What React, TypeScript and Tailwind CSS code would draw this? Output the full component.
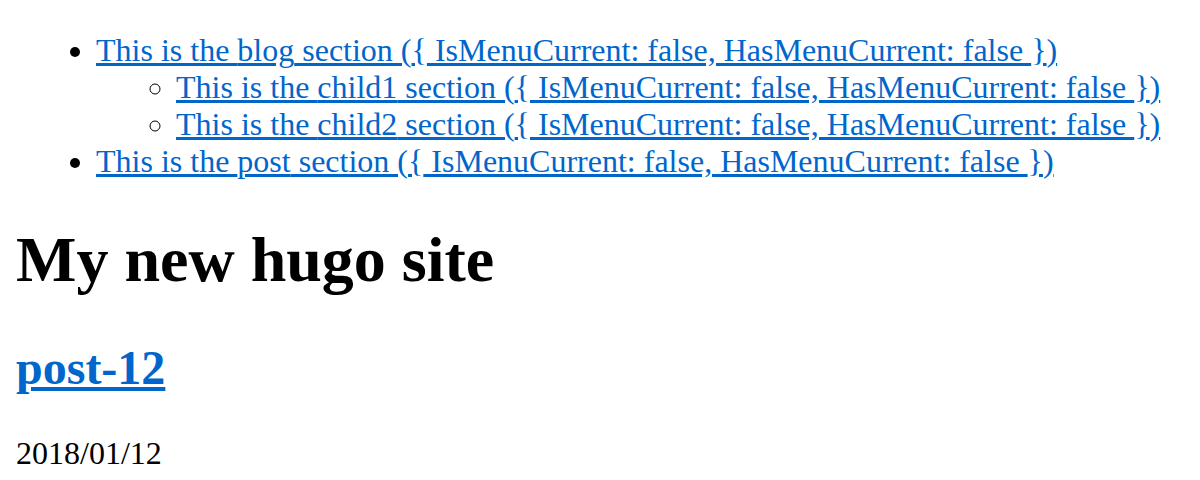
const sections = [
  { name: "blog", children: ["child1", "child2"] },
  { name: "post", children: [] as string[] },
]

function MenuLink({ name }: { name: string }) {
  return (
    <a href="#" className="text-[#0066cc] underline">
      This is the {name} section ({"{"} IsMenuCurrent: false, HasMenuCurrent: false {"}"})
    </a>
  )
}

export default function App() {
  return (
    <div className="m-4 bg-white text-black text-[32px] leading-[normal] font-['Liberation_Serif','Times_New_Roman',serif]">
      <ul className="list-disc pl-20 my-8">
        {sections.map((s) => (
          <li key={s.name}>
            <MenuLink name={s.name} />
            {s.children.length > 0 && (
              <ul className="list-[circle] pl-20">
                {s.children.map((c) => (
                  <li key={c}>
                    <MenuLink name={c} />
                  </li>
                ))}
              </ul>
            )}
          </li>
        ))}
      </ul>
      <h1 className="text-[64px] leading-[normal] font-bold my-[42.88px]">My new hugo site</h1>
      <h2 className="text-[48px] leading-[normal] font-bold my-[39.84px]">
        <a href="#" className="text-[#0066cc] underline">post-12</a>
      </h2>
      <p className="my-8">2018/01/12</p>
    </div>
  )
}
